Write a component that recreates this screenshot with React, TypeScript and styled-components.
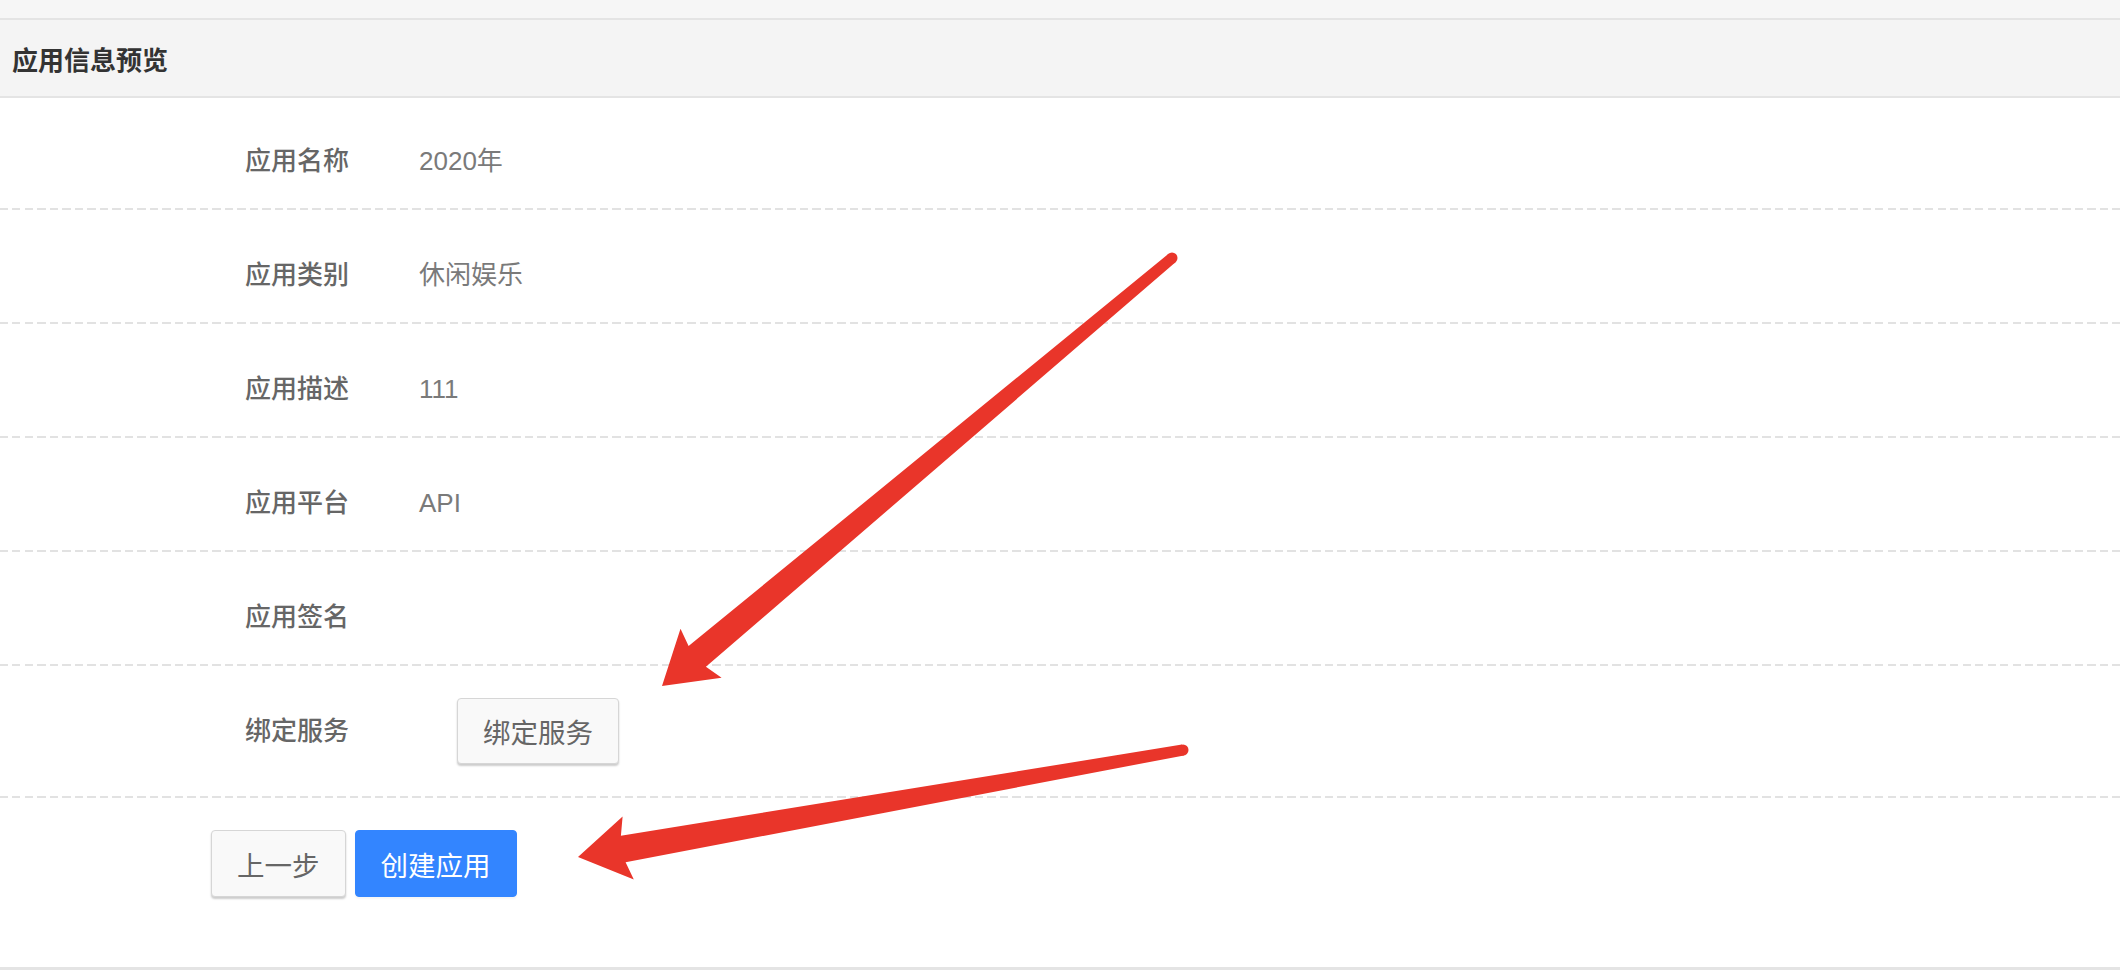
import React from 'react';
import styled, { createGlobalStyle } from 'styled-components';

const GlobalStyle = createGlobalStyle`
  html, body {
    margin: 0;
    padding: 0;
    background: #fff;
  }
  body {
    font-family: "Liberation Sans", "Noto Sans CJK SC", sans-serif;
  }
`;

const Page = styled.div`
  position: relative;
  width: 2120px;
  height: 970px;
  overflow: hidden;
  background: #fff;
`;

const TopStrip = styled.div`
  height: 18px;
  background: #f6f6f6;
  border-bottom: 2px solid #e4e4e4;
`;

const PanelHeader = styled.div`
  height: 76px;
  display: flex;
  align-items: center;
  padding-left: 12px;
  background: #f4f4f4;
  border-bottom: 2px solid #e4e4e4;
  font-size: 26px;
  font-weight: 700;
  color: #333;
`;

const Row = styled.div<{ $tall?: boolean }>`
  display: flex;
  align-items: center;
  box-sizing: border-box;
  padding: ${p => (p.$tall ? '32px 0 34px 245px' : '45px 0 29px 245px')};
  background-image: repeating-linear-gradient(to right, #e2e2e2 0 8px, transparent 8px 12.5px);
  background-size: 100% 2px;
  background-repeat: no-repeat;
  background-position: left bottom;

  &:first-child {
    padding-top: 43px;
  }
`;

const Label = styled.div`
  width: 174px;
  flex-shrink: 0;
  line-height: 40px;
  font-size: 26px;
  font-weight: 500;
  color: #666;
`;

const Value = styled.div`
  line-height: 40px;
  font-size: 26px;
  color: #7a7a7a;
`;

const Button = styled.button<{ $primary?: boolean; $offset?: number }>`
  height: 66px;
  padding: 0 25px;
  margin-left: ${p => p.$offset ?? 0}px;
  font-family: inherit;
  font-size: 27.5px;
  border-radius: 4px;
  border: 1px solid ${p => (p.$primary ? '#3385ff' : '#d6d6d6')};
  background: ${p => (p.$primary ? '#3385ff' : '#f9f9f9')};
  color: ${p => (p.$primary ? '#fff' : '#666')};
  box-shadow: ${p => (p.$primary ? '0 2px 2px rgba(0,0,0,0.04)' : '0 2px 2px rgba(0,0,0,0.2)')};
  cursor: pointer;
`;

const Actions = styled.div`
  display: flex;
  gap: 9px;
  box-sizing: border-box;
  height: 172px;
  padding: 32px 0 0 211px;
  border-bottom: 3px solid #e4e4e4;

  ${Button} {
    height: 67px;
  }
`;

const Overlay = styled.svg`
  position: absolute;
  left: 0;
  top: 0;
  pointer-events: none;
`;

type Pt = [number, number];

// polygon for a hand drawn annotation arrow, tapering from tail to head
function arrowPath(tail: Pt, tip: Pt, tailHalf: number) {
  const dx = tip[0] - tail[0];
  const dy = tip[1] - tail[1];
  const len = Math.hypot(dx, dy);
  const ux = dx / len;
  const uy = dy / len;
  const nx = -uy;
  const ny = ux;
  const at = (back: number, off: number): Pt => [tip[0] - ux * back + nx * off, tip[1] - uy * back + ny * off];
  const pts: Pt[] = [
    [tail[0] + nx * tailHalf, tail[1] + ny * tailHalf],
    at(46, 13.5),
    at(51, 32),
    tip,
    at(51, -32),
    at(46, -13.5),
    [tail[0] - nx * tailHalf, tail[1] - ny * tailHalf],
  ];
  return pts.map(p => `${p[0].toFixed(1)},${p[1].toFixed(1)}`).join(' ');
}

const arrows: { tail: Pt; tip: Pt; w: number }[] = [
  { tail: [1172, 258], tip: [662, 686], w: 5.5 },
  { tail: [1183, 750], tip: [578, 857], w: 5.5 },
];

const fields = [
  { label: '应用名称', value: '2020年' },
  { label: '应用类别', value: '休闲娱乐' },
  { label: '应用描述', value: '111' },
  { label: '应用平台', value: 'API' },
  { label: '应用签名', value: '' },
];

export default function App() {
  return (
    <Page>
      <GlobalStyle />
      <TopStrip />
      <PanelHeader>应用信息预览</PanelHeader>
      <div>
        {fields.map(f => (
          <Row key={f.label}>
            <Label>{f.label}</Label>
            <Value>{f.value}</Value>
          </Row>
        ))}
        <Row $tall>
          <Label>绑定服务</Label>
          <Button $offset={38}>绑定服务</Button>
        </Row>
      </div>
      <Actions>
        <Button>上一步</Button>
        <Button $primary>创建应用</Button>
      </Actions>

      <Overlay width={2120} height={970} viewBox="0 0 2120 970">
        {arrows.map((a, i) => (
          <g key={i} fill="#e9352a">
            <polygon points={arrowPath(a.tail, a.tip, a.w)} />
            <circle cx={a.tail[0]} cy={a.tail[1]} r={a.w} />
          </g>
        ))}
      </Overlay>
    </Page>
  );
}
